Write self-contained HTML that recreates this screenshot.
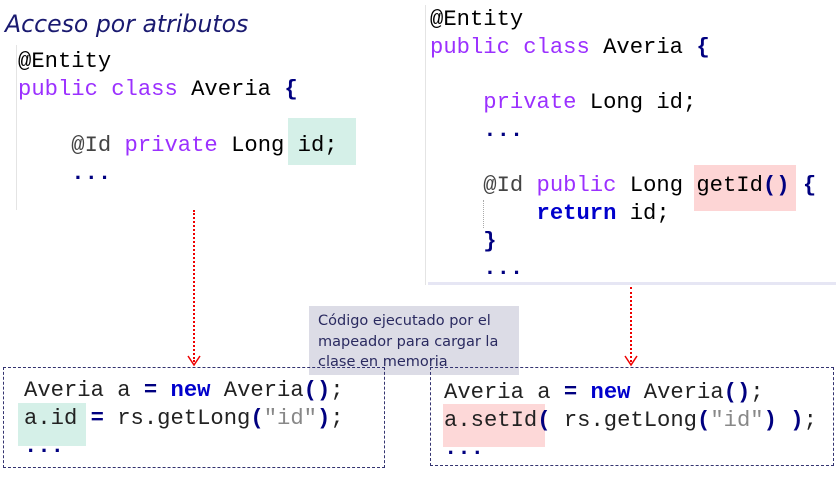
<!DOCTYPE html>
<html><head><meta charset="utf-8"><style>
*{margin:0;padding:0}
body{width:840px;height:484px;background:#fff;position:relative;overflow:hidden;font-family:"Liberation Mono",monospace}
.a{position:absolute;white-space:pre}
.c{font-size:22.2px;line-height:28px;color:#000}
.k{color:#9b30ff}
.b{color:#000080;font-weight:bold}
.n{color:#0000cc;font-weight:bold}
.s{color:#888}
.g{color:#444}
.hl{position:absolute}
.bc{font-size:22.2px;line-height:28px;color:#222}
</style></head><body>
<div class="a" style="left:5px;top:10px;font-family:'DejaVu Sans',sans-serif;font-style:italic;font-size:23.6px;color:#1a1a70">Acceso por atributos</div>
<div class="a" style="left:16px;top:45px;width:1px;height:165px;background:#e4e4e4"></div>
<div class="hl" style="left:288px;top:118px;width:68px;height:47px;background:#d5f0e8"></div>
<div class="a c" style="left:18px;top:48px">@Entity
<span class="k">public class</span> Averia <span class="b">{</span>

    <span class="g">@Id</span> <span class="k">private</span> Long id;
    <span class="b">...</span></div>

<div class="a" style="left:425px;top:5px;width:1px;height:280px;background:#e4e4e4"></div>
<div class="a" style="left:428px;top:282px;width:408px;height:3px;background:#e6e6f4"></div>
<div class="hl" style="left:694px;top:165px;width:102px;height:46px;background:#fdd5d5"></div>
<div class="a" style="left:483px;top:200px;width:0;height:28px;border-left:1px dotted #aaa"></div>
<div class="a c" style="left:430px;top:6px;line-height:27.7px">@Entity
<span class="k">public class</span> Averia <span class="b">{</span>

    <span class="k">private</span> Long id;
    <span class="b">...</span>

    <span class="g">@Id</span> <span class="k">public</span> Long getId<span class="b">()</span> <span class="b">{</span>
        <span class="n">return</span> id;
    <span class="b">}</span>
    <span class="b">...</span></div>

<div class="a" style="left:193px;top:210px;height:152px;border-left:2px dotted #e00"></div>
<svg class="a" style="left:187px;top:355px" width="14" height="12"><path d="M1 1 L7 10 L13 1" stroke="#e00" stroke-width="1.5" fill="none"/></svg>
<div class="a" style="left:630px;top:287px;height:75px;border-left:2px dotted #e00"></div>
<svg class="a" style="left:624px;top:355px" width="14" height="12"><path d="M1 1 L7 10 L13 1" stroke="#e00" stroke-width="1.5" fill="none"/></svg>

<div class="a" style="left:309px;top:306px;width:210px;height:69px;background:#dcdce6"></div>
<div class="a" style="left:318px;top:311px;font-family:'DejaVu Sans',sans-serif;font-size:14.5px;line-height:20.5px;color:#2a2a60">Código ejecutado por el
mapeador para cargar la
clase en memoria</div>

<div class="a" style="left:3px;top:367px;width:380px;height:99px;border:1px dashed #333370"></div>
<div class="a" style="left:430px;top:367px;width:402px;height:97px;border:1px dashed #333370"></div>
<div class="hl" style="left:18px;top:403px;width:68px;height:43px;background:#d5f0e8"></div>
<div class="hl" style="left:443px;top:404px;width:102px;height:43px;background:#fdd8d8"></div>
<div class="a bc" style="left:24px;top:377px">Averia a <span class="b">=</span> <span class="n">new</span> Averia<span class="b">()</span>;
a.id <span class="b">=</span> rs.getLong<span class="b">(</span><span class="s">"id"</span><span class="b">)</span>;
<span class="b">...</span></div>
<div class="a bc" style="left:444px;top:379px">Averia a <span class="b">=</span> <span class="n">new</span> Averia<span class="b">()</span>;
a.setId<span class="b">(</span> rs.getLong<span class="b">(</span><span class="s">"id"</span><span class="b">)</span> <span class="b">)</span>;
<span class="b">...</span></div>
</body></html>
